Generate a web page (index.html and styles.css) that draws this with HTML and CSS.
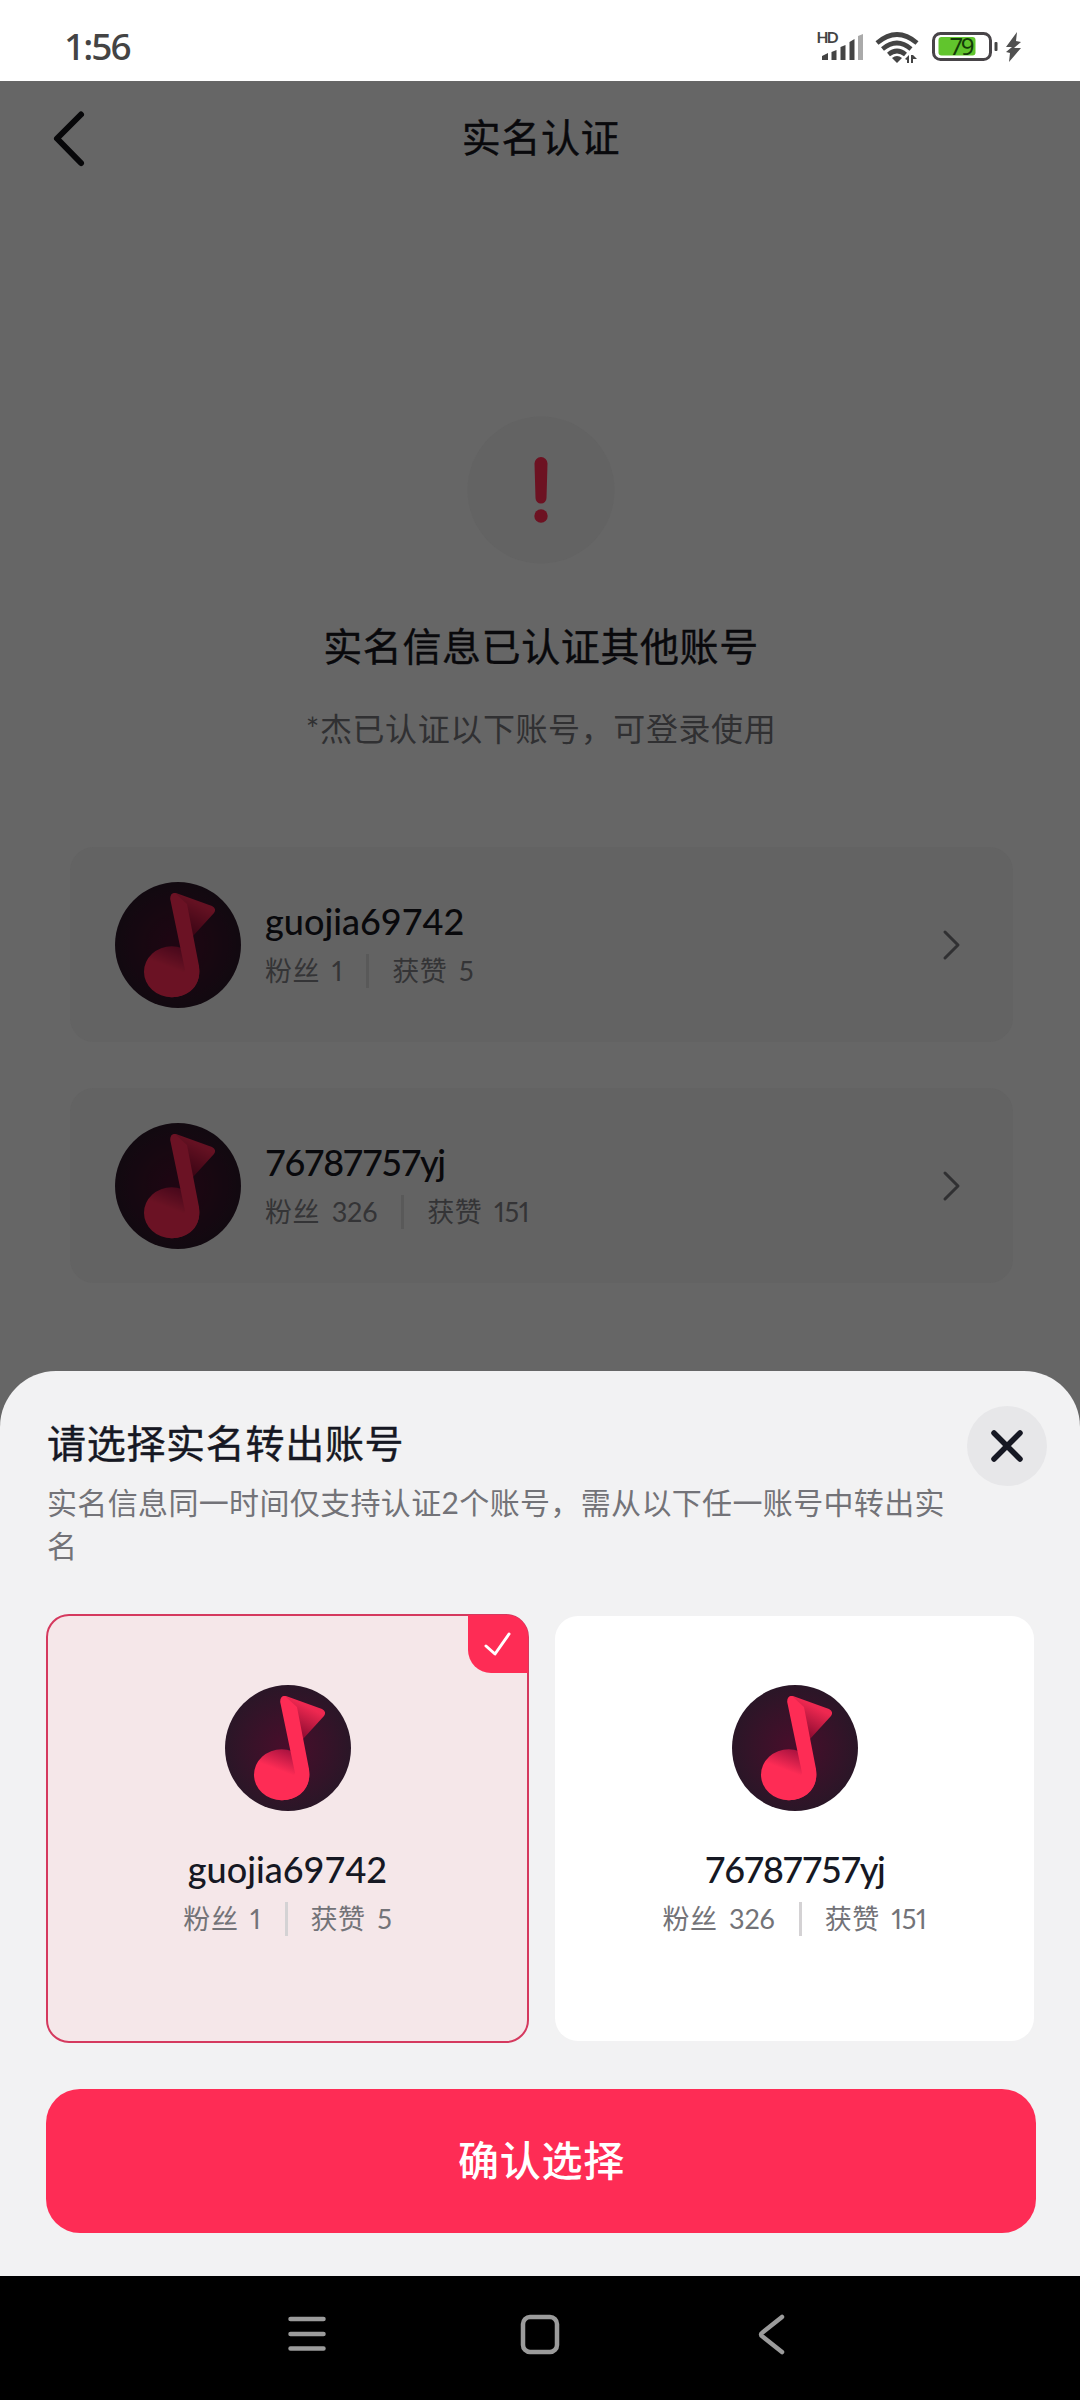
FILE: index.html
```html
<!DOCTYPE html>
<html lang="zh-CN">
<head>
<meta charset="utf-8">
<title>实名认证</title>
<link rel="stylesheet" href="styles.css">
</head>
<body>
<svg class="defs" width="0" height="0" aria-hidden="true">
  <defs>
    <radialGradient id="disc"><stop offset="0" stop-color="#4a0d2b"/><stop offset="1" stop-color="#2a1627"/></radialGradient>
    <linearGradient id="flag" x1="76" y1="50" x2="89" y2="25" gradientUnits="userSpaceOnUse"><stop offset="0" stop-color="#930d33"/><stop offset="1" stop-color="#ee2850"/></linearGradient>
    <linearGradient id="head" x1="67" y1="66" x2="59" y2="87" gradientUnits="userSpaceOnUse"><stop offset="0" stop-color="#a8123f"/><stop offset="1" stop-color="#fe2c55"/></linearGradient>
    <symbol id="note" viewBox="0 0 126 126">
      <circle cx="63" cy="63" r="63" fill="url(#disc)"/>
      <path d="M56 15Q56 10.500 61 11L97 24Q102 27 99 31L78 54L66 46Z" fill="url(#flag)"/>
      <ellipse cx="56.700" cy="89.700" rx="27.700" ry="25.500" fill="url(#head)"/>
      <path d="M55.200 17Q55 11 60 11L72 22L84 84Q86 101 75 109.500Q66 116 54 115L70 88Z" fill="#fe2c55"/>
    </symbol>
  </defs>
</svg>
<div class="screen">
  <div class="status">
    <span class="time">1:56</span>
    <svg class="status-icons" width="206" height="36" viewBox="816 28 206 36">
      <text x="816.500" y="43" class="hd" textLength="22">HD</text>
      <g fill="#444"><path d="M822 60v-4l6-3v7zM831.500 60v-8l5-2v10zM840.500 60v-13l5-2v15zM849.500 60v-18l5-3v21z"/><path d="M858 60v-24l5-2v26z" fill="#aaa"/></g>
      <g fill="none" stroke="#444" stroke-width="4.600"><path d="M877 43q20-17 40 0"/><path d="M882.500 49q14.500-12 28.500 0"/><path d="M888.500 54.500q8.500-7 17 0"/></g>
      <path d="M892 58q5-4 10 0l-5 5z" fill="#444"/>
      <path d="M905 59l4-4v8h-2v-3zM911 55h2v8h-2zM913 55l4 4h-4z" fill="#444"/>
      <rect x="933.500" y="33.500" width="57" height="26" rx="7" fill="#fff" stroke="#484448" stroke-width="3"/>
      <rect x="938.500" y="37" width="37" height="18.500" rx="3" fill="#61c52d"/>
      <text x="949.500" y="55" class="pct" textLength="25">79</text>
      <rect x="994.500" y="42" width="3" height="9" rx="1" fill="#444"/>
      <path d="M1017 32l-11 15h6l-6 5 4 1-1 9 12-14h-7l7-6-5-1z" fill="#505050"/>
    </svg>
  </div>
  <main class="page">
    <header class="topbar">
      <svg class="back" width="36" height="60" viewBox="0 0 36 60"><path d="M30 6.500L6 30.500L30 55" /></svg>
      <h1>实名认证</h1>
    </header>
    <section class="notice">
      <svg width="148" height="148" viewBox="0 0 148 148"><circle cx="74" cy="74" r="73.500" fill="#636363"/><path d="M67.500 47.500a6.500 6.500 0 0 1 13 0l-1 34.500a5.500 5.500 0 0 1-11 0z" fill="#6d1222"/><circle cx="74" cy="100" r="6.700" fill="#6d1222"/></svg>
      <h2>实名信息已认证其他账号</h2>
      <p>*杰已认证以下账号，可登录使用</p>
    </section>
    <section class="accounts">
      <article class="account">
        <svg class="avatar"><use href="#note"/></svg>
        <div class="info"><div class="name">guojia69742</div><div class="stats"><span>粉丝 <b>1</b></span><i></i><span>获赞 <b>5</b></span></div></div>
        <svg class="go" width="20" height="32" viewBox="0 0 20 32"><path d="M3 3l13 13L3 29"/></svg>
      </article>
      <article class="account">
        <svg class="avatar"><use href="#note"/></svg>
        <div class="info"><div class="name num">76787757yj</div><div class="stats"><span>粉丝 <b>326</b></span><i></i><span>获赞 <b>151</b></span></div></div>
        <svg class="go" width="20" height="32" viewBox="0 0 20 32"><path d="M3 3l13 13L3 29"/></svg>
      </article>
    </section>
  </main>
  <section class="sheet">
    <div class="sheet-head">
      <div class="sheet-text">
        <h2>请选择实名转出账号</h2>
        <p>实名信息同一时间仅支持认证2个账号，需从以下任一账号中转出实名</p>
      </div>
      <div class="close"><svg width="34" height="34" viewBox="0 0 34 34"><path d="M4 4l26 26M30 4L4 30"/></svg></div>
    </div>
    <div class="choices">
      <article class="choice selected">
        <div class="badge"><svg width="30" height="28" viewBox="0 0 30 28"><path d="M3 16l9 8L26 4"/></svg></div>
        <svg class="avatar"><use href="#note"/></svg>
        <div class="name">guojia69742</div>
        <div class="stats"><span>粉丝 <b>1</b></span><i></i><span>获赞 <b>5</b></span></div>
      </article>
      <article class="choice">
        <svg class="avatar"><use href="#note"/></svg>
        <div class="name num">76787757yj</div>
        <div class="stats"><span>粉丝 <b>326</b></span><i></i><span>获赞 <b>151</b></span></div>
      </article>
    </div>
    <button class="confirm">确认选择</button>
  </section>
  <nav class="nav">
    <svg width="40" height="44" viewBox="0 0 40 44"><path d="M3.500 6h33M3.500 21h33M3.500 35.500h33"/></svg>
    <svg width="40" height="44" viewBox="0 0 40 44"><rect x="3" y="4" width="34" height="35" rx="7"/></svg>
    <svg width="40" height="44" viewBox="0 0 40 44"><path d="M30 4L10.500 19.500q-3 2 0 4L30 39"/></svg>
  </nav>
</div>
</body>
</html>
```
FILE: styles.css
```css
* { box-sizing: border-box; }
body { margin: 0; font-family: Lato, "Noto Sans CJK SC", sans-serif; }
h1, h2, p { margin: 0; font-weight: 400; }
h1, h2 { -webkit-text-stroke: .4px currentColor; }
.defs { position: absolute; }
.screen { width: 1080px; height: 2400px; display: flex; flex-direction: column; background: #666; overflow: hidden; }
svg { flex: none; display: block; }

.status { height: 81px; flex: none; background: #fff; display: flex; justify-content: space-between; padding: 28px 58px 0 64px; }
.time { font: 500 37px/36px "Noto Sans", sans-serif; letter-spacing: -2px; color: #444; }
.hd { font: 700 15.500px Lato, sans-serif; fill: #444; }
.pct { font: 400 24px "Noto Sans", sans-serif; fill: #143c08; }

.page { height: 1290px; flex: none; }
.topbar { height: 114px; display: flex; align-items: center; padding-left: 51px; }
.back { fill: none; stroke: #070709; stroke-width: 6; stroke-linecap: round; stroke-linejoin: round; }
.topbar h1 { flex: 1; margin-right: 85px; padding-bottom: 3px; text-align: center; font-size: 39px; line-height: 60px; letter-spacing: .6px; color: #09090c; }
.notice { margin-top: 221px; display: flex; flex-direction: column; align-items: center; padding-left: 2px; }
.notice h2 { margin-top: 52px; font-size: 39px; line-height: 60px; letter-spacing: .6px; color: #09090c; }
.notice p { margin-top: 29px; font-size: 32px; line-height: 48px; letter-spacing: .6px; color: #303032; }
.accounts { margin-top: 94px; padding: 0 67px 0 70px; display: flex; flex-direction: column; gap: 46px; }
.account { height: 195px; background: #636363; border-radius: 24px; display: flex; align-items: center; padding: 0 51px 0 45px; }
.avatar { width: 126px; height: 126px; flex: none; }
.account .avatar { filter: brightness(.42); }
.info { flex: 1; padding: 0 0 3px 24px; }
.name { font-size: 36px; line-height: 44px; letter-spacing: 0; color: #161823; font-weight: 500; }
.num { letter-spacing: -1.500px; }
.account .name { color: #09090c; }
.stats { display: flex; align-items: center; height: 34px; font-size: 27px; line-height: 34px; letter-spacing: .6px; color: #737378; white-space: pre; margin-top: 11px; font-variant-numeric: proportional-nums; }
.stats b { font-weight: 400; margin-left: 4px; letter-spacing: -.2px; }
.stats i { width: 3px; height: 34px; background: #d4d2d4; margin: 0 23px 0 24px; }
.account .stats { color: #343436; }
.account .stats i { background: #595959; }
.go { fill: none; stroke: #303032; stroke-width: 3; stroke-linecap: round; stroke-linejoin: round; }

.sheet { height: 905px; flex: none; background: #f2f2f3; border-radius: 56px 56px 0 0; display: flex; flex-direction: column; padding: 35px 44px 43px 46px; }
.sheet-head { display: flex; height: 208px; justify-content: space-between; margin-right: -11px; }
.sheet-text { width: 905px; padding: 7px 0 0 1px; }
.sheet-text h2 { font-size: 39px; line-height: 60px; letter-spacing: .7px; color: #161823; }
.sheet-text p { font-size: 30px; line-height: 43px; letter-spacing: .35px; color: #737378; margin-top: 8px; }
.close { width: 80px; height: 80px; border-radius: 50%; background: #e7e7e9; display: grid; place-items: center; }
.close svg { fill: none; stroke: #161823; stroke-width: 5.500; stroke-linecap: round; }
.choices { height: 429px; flex: none; display: flex; align-items: center; gap: 26px; }
.choice { position: relative; width: 479px; height: 425px; background: #fff; border-radius: 23px; display: flex; flex-direction: column; align-items: center; padding-top: 69px; }
.choice.selected { width: 483px; height: 429px; border: 2px solid #d5395e; background: #f5e7e9; }
.choice .name { margin-top: 36px; }
.badge { position: absolute; top: -1px; right: -1px; width: 60px; height: 58px; background: #fe2c55; border-radius: 0 21px 0 23px; display: grid; place-items: center; }
.badge svg { fill: none; stroke: #fff; stroke-width: 3; stroke-linecap: round; stroke-linejoin: round; }
.confirm { margin-top: 46px; height: 144px; flex: none; border: 0; border-radius: 34px; background: #fe2c55; color: #fff; font: 500 41px/60px "Noto Sans CJK SC", sans-serif; letter-spacing: .8px; padding: 0 0 6px 1px; }

.nav { height: 124px; flex: none; background: #000; display: flex; padding: 37px 288px 0 287px; justify-content: space-between; }
.nav svg { fill: none; stroke: #9b9b9b; stroke-width: 4.500; stroke-linecap: round; }
```
